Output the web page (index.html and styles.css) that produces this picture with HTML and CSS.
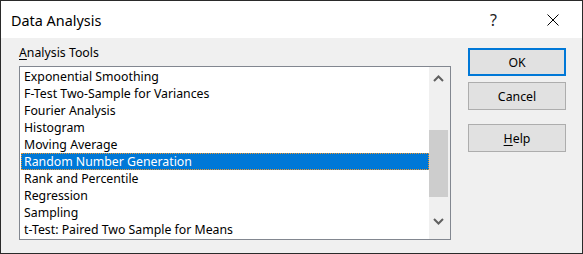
FILE: index.html
```html
<!DOCTYPE html>
<html>
<head>
<meta charset="utf-8">
<link rel="stylesheet" href="styles.css">
</head>
<body>
<div class="window">
  <div class="titlebar">
    <span class="title">Data Analysis</span>
    <span class="help-q">?</span>
    <svg class="close" width="12" height="12" viewBox="0 0 12 12"><path d="M0.5 0.5L11.5 11.5M11.5 0.5L0.5 11.5" stroke="#000" stroke-width="1" fill="none"/></svg>
  </div>
  <div class="content">
    <div class="left">
      <div class="label"><u>A</u>nalysis Tools</div>
      <div class="listbox">
        <ul class="items">
          <li>Exponential Smoothing</li>
          <li>F-Test Two-Sample for Variances</li>
          <li>Fourier Analysis</li>
          <li>Histogram</li>
          <li>Moving Average</li>
          <li class="selected">Random Number Generation</li>
          <li>Rank and Percentile</li>
          <li>Regression</li>
          <li>Sampling</li>
          <li>t-Test: Paired Two Sample for Means</li>
        </ul>
        <div class="scrollbar">
          <div class="arrow up"><svg width="11" height="7" viewBox="0 0 11 7"><path d="M1 6L5.5 1.5L10 6" stroke="#606060" stroke-width="2" fill="none"/></svg></div>
          <div class="track"><div class="thumb"></div></div>
          <div class="arrow down"><svg width="11" height="7" viewBox="0 0 11 7"><path d="M1 1L5.5 5.5L10 1" stroke="#606060" stroke-width="2" fill="none"/></svg></div>
        </div>
      </div>
    </div>
    <div class="buttons">
      <div class="btn default">OK</div>
      <div class="btn">Cancel</div>
      <div class="btn help-btn"><u>H</u>elp</div>
    </div>
  </div>
</div>
</body>
</html>
```

FILE: styles.css
```css
html, body {
  margin: 0;
  padding: 0;
}
body {
  font-family: "Noto Sans", "Liberation Sans", sans-serif;
  font-size: 12.3px;
  color: #000;
}
.window {
  width: 583px;
  height: 254px;
  box-sizing: border-box;
  border: 1px solid #2a2a2a;
  background: #f0f0f0;
  display: flex;
  flex-direction: column;
}
.titlebar {
  height: 37px;
  background: #fff;
  display: flex;
  align-items: center;
  padding-left: 10px;
  flex-shrink: 0;
}
.title {
  font-size: 14.4px;
  flex: 1;
  padding-top: 1px;
}
.help-q {
  font-size: 16px;
  color: #222;
  margin-right: 50px;
  padding-top: 1px;
}
.close {
  margin-right: 23px;
}
.content {
  flex: 1;
  display: flex;
  padding: 10px 0 0 18px;
}
.left {
  width: 432px;
  display: flex;
  flex-direction: column;
  padding-top: 0;
}
.label {
  height: 16px;
  line-height: 16px;
  margin-top: -3px;
  margin-bottom: 5px;
}
.label u {
  text-underline-offset: 2px;
}
.listbox {
  height: 174px;
  box-sizing: border-box;
  border: 1px solid #828790;
  background: #fff;
  display: flex;
}
.items {
  list-style: none;
  margin: 0;
  padding: 1px 0 0 1px;
  flex: 1;
}
.items li {
  height: 17px;
  line-height: 17px;
  padding-left: 3px;
  box-sizing: border-box;
  white-space: nowrap;
}
.items li.selected {
  background: #0078d7;
  color: #fff;
  border: 1px dotted #f0962a;
  padding-left: 2px;
  line-height: 15px;
}
.scrollbar {
  width: 21px;
  background: #f0f0f0;
  display: flex;
  flex-direction: column;
}
.arrow {
  display: flex;
  justify-content: center;
  align-items: flex-start;
  padding-right: 2px;
}
.arrow.up {
  height: 18px;
  padding-top: 8px;
}
.arrow.down {
  height: 21px;
  padding-top: 2px;
}
.track {
  flex: 1;
  padding-top: 37px;
}
.thumb {
  width: 19px;
  height: 67px;
  background: #cdcdcd;
}
.buttons {
  margin-left: 17px;
  display: flex;
  flex-direction: column;
}
.btn {
  width: 98px;
  height: 28px;
  box-sizing: border-box;
  border: 1px solid #adadad;
  background: #e1e1e1;
  display: flex;
  align-items: center;
  justify-content: center;
  margin-bottom: 6px;
}
.btn.default {
  border: 2px solid #0078d7;
}
.help-btn {
  margin-top: 8px;
}
.help-btn u {
  text-underline-offset: 2px;
}
```
